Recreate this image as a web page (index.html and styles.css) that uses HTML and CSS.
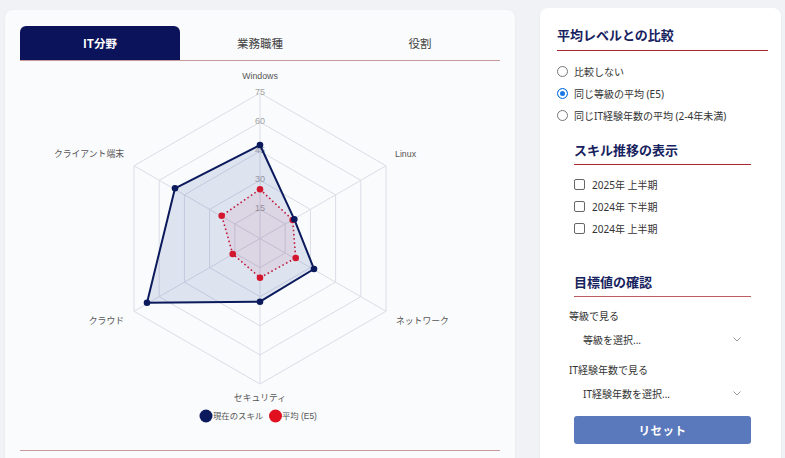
FILE: index.html
```html
<!DOCTYPE html>
<html lang="ja">
<head>
<meta charset="utf-8">
<title>スキル比較</title>
<link rel="stylesheet" href="styles.css">
</head>
<body>
<div class="page">
  <main class="chart-card">
    <nav class="tabs">
      <div class="tab active">IT分野</div>
      <div class="tab">業務職種</div>
      <div class="tab">役割</div>
    </nav>
    <svg class="radar" width="480" height="389" viewBox="0 0 480 389">
      <g transform="translate(-20,-61)">
        <g class="grid">
          <polygon points="260,93 386,165.75 386,311.25 260,384 134,311.25 134,165.75"/>
          <polygon points="260,122.1 360.8,180.3 360.8,296.7 260,354.9 159.2,296.7 159.2,180.3"/>
          <polygon points="260,151.2 335.6,194.85 335.6,282.15 260,325.8 184.4,282.15 184.4,194.85"/>
          <polygon points="260,180.3 310.4,209.4 310.4,267.6 260,296.7 209.6,267.6 209.6,209.4"/>
          <polygon points="260,209.4 285.2,223.95 285.2,253.05 260,267.6 234.8,253.05 234.8,223.95"/>
          <line x1="260" y1="238.5" x2="260" y2="93"/>
          <line x1="260" y1="238.5" x2="386" y2="165.75"/>
          <line x1="260" y1="238.5" x2="386" y2="311.25"/>
          <line x1="260" y1="238.5" x2="260" y2="384"/>
          <line x1="260" y1="238.5" x2="134" y2="311.25"/>
          <line x1="260" y1="238.5" x2="134" y2="165.75"/>
        </g>
        <g class="ticks">
          <text x="260" y="94.5">75</text>
          <text x="260" y="123.5">60</text>
          <text x="260" y="152.5">45</text>
          <text x="260" y="181.5">30</text>
          <text x="260" y="210.5">15</text>
        </g>
        <polygon class="area-avg" points="260,189.3 292.7,220 295.7,258 260,277.7 232.7,254 221.7,215.7"/>
        <polygon class="area-cur" points="260,145 294.3,219.3 314,269 260,301.7 147,302.7 175,188.3"/>
        <g class="pts-avg">
          <circle cx="260" cy="189.3" r="3.3"/>
          <circle cx="292.7" cy="220" r="3.3"/>
          <circle cx="295.7" cy="258" r="3.3"/>
          <circle cx="260" cy="277.7" r="3.3"/>
          <circle cx="232.7" cy="254" r="3.3"/>
          <circle cx="221.7" cy="215.7" r="3.3"/>
        </g>
        <g class="pts-cur">
          <circle cx="260" cy="145" r="3.3"/>
          <circle cx="294.3" cy="219.3" r="3.3"/>
          <circle cx="314" cy="269" r="3.3"/>
          <circle cx="260" cy="301.7" r="3.3"/>
          <circle cx="147" cy="302.7" r="3.3"/>
          <circle cx="175" cy="188.3" r="3.3"/>
        </g>
        <g class="axis-labels">
          <text x="260" y="79" text-anchor="middle">Windows</text>
          <text x="395" y="157">Linux</text>
          <text x="396" y="324">ネットワーク</text>
          <text x="260" y="401" text-anchor="middle">セキュリティ</text>
          <text x="124" y="324" text-anchor="end">クラウド</text>
          <text x="124" y="157" text-anchor="end">クライアント端末</text>
        </g>
        <g class="legend">
          <circle cx="206" cy="416" r="6.5" class="dot-cur"/>
          <text x="213" y="419">現在のスキル</text>
          <circle cx="275.5" cy="416" r="6.5" class="dot-avg"/>
          <text x="282" y="419">平均 (E5)</text>
        </g>
      </g>
    </svg>
    <div class="divider"></div>
  </main>

  <aside class="side-card">
    <section class="block">
      <h2 class="block-title">平均レベルとの比較</h2>
      <div class="opt-list">
        <label class="opt"><input type="radio" name="cmp" class="radio"><span>比較しない</span></label>
        <label class="opt"><input type="radio" name="cmp" class="radio" checked><span>同じ等級の平均 (E5)</span></label>
        <label class="opt"><input type="radio" name="cmp" class="radio"><span>同じIT経験年数の平均 (2-4年未満)</span></label>
      </div>
    </section>

    <section class="block inset trend">
      <h2 class="block-title">スキル推移の表示</h2>
      <div class="opt-list">
        <label class="opt check"><input type="checkbox" class="checkbox"><span>2025年 上半期</span></label>
        <label class="opt check"><input type="checkbox" class="checkbox"><span>2024年 下半期</span></label>
        <label class="opt check"><input type="checkbox" class="checkbox"><span>2024年 上半期</span></label>
      </div>
    </section>

    <section class="block inset target">
      <h2 class="block-title">目標値の確認</h2>
      <div class="field">
        <div class="field-label">等級で見る</div>
        <div class="select"><span>等級を選択...</span>
          <svg class="chev" width="8" height="5" viewBox="0 0 8 5"><polyline points="0.5,0.5 4,4 7.5,0.5"/></svg>
        </div>
      </div>
      <div class="field">
        <div class="field-label">IT経験年数で見る</div>
        <div class="select"><span>IT経験年数を選択...</span>
          <svg class="chev" width="8" height="5" viewBox="0 0 8 5"><polyline points="0.5,0.5 4,4 7.5,0.5"/></svg>
        </div>
      </div>
      <button class="reset" type="button">リセット</button>
    </section>
  </aside>
</div>
</body>
</html>
```

FILE: styles.css
```css
* { box-sizing: border-box; }

html, body {
  margin: 0;
  padding: 0;
  background: #f0f2f5;
  font-family: "Noto Sans", "Noto Sans CJK JP", sans-serif;
  color: #333;
  overflow: hidden;
}

.page {
  display: flex;
  align-items: flex-start;
  gap: 25px;
  padding: 0 4px 0 5px;
  height: 458px;
}

/* left card */
.chart-card {
  width: 510px;
  margin-top: 10px;
  height: 470px;
  background: #fafbfc;
  border-radius: 8px;
  box-shadow: 0 1px 3px rgba(0, 0, 0, 0.05);
  padding: 16px 15px 0 15px;
}

.tabs {
  display: flex;
  width: 480px;
  border-bottom: 1px solid #c99a9c;
}

.tab {
  width: 160px;
  height: 34px;
  display: flex;
  align-items: center;
  justify-content: center;
  font-family: "Noto Sans CJK JP", sans-serif;
  font-size: 11.5px;
  color: #444;
}

.tab.active {
  background: #0b145b;
  color: #fff;
  font-weight: 700;
  border-radius: 6px 6px 0 0;
}

.radar {
  display: block;
}

.grid polygon,
.grid line {
  fill: none;
  stroke: #d9dde6;
  stroke-width: 1;
}

.ticks text {
  font-family: "Liberation Sans", sans-serif;
  font-size: 9px;
  fill: #a3a3a3;
  text-anchor: middle;
}

.area-avg {
  fill: rgba(215, 30, 60, 0.07);
  stroke: #d3152e;
  stroke-width: 1.6;
  stroke-dasharray: 1.6 2.6;
}

.area-cur {
  fill: rgba(40, 70, 160, 0.13);
  stroke: #0b1a5c;
  stroke-width: 2;
  stroke-linejoin: round;
}

.pts-avg circle { fill: #d3152e; }
.pts-cur circle { fill: #0b1a5c; }

.axis-labels text {
  font-family: "Liberation Sans", "Noto Sans CJK JP", sans-serif;
  font-size: 8.8px;
  fill: #555;
}

.legend text {
  font-family: "Liberation Sans", "Noto Sans CJK JP", sans-serif;
  font-size: 8.4px;
  fill: #555;
}

.dot-cur { fill: #0b1a5c; }
.dot-avg { fill: #e0101e; }

.divider {
  width: 480px;
  border-top: 1px solid #c99a9c;
}

/* right card */
.side-card {
  width: 241px;
  margin-top: 8px;
  height: 470px;
  background: #fff;
  border-radius: 8px;
  box-shadow: 0 1px 3px rgba(0, 0, 0, 0.05);
  padding: 18px 13px 0 17px;
}

.block-title {
  margin: 0;
  font-family: "Noto Sans CJK JP", sans-serif;
  font-size: 13px;
  line-height: 18px;
  font-weight: 700;
  color: #16225e;
  padding-bottom: 6px;
  border-bottom: 1px solid #a8262f;
}

.opt-list {
  display: flex;
  flex-direction: column;
  margin-top: 9px;
}

.opt {
  height: 22px;
  display: flex;
  align-items: center;
  gap: 6px;
  font-family: "Noto Sans", "Noto Sans CJK JP", sans-serif;
  font-size: 10px;
  color: #333;
}

.radio {
  appearance: none;
  margin: 0;
  width: 11px;
  height: 11px;
  border-radius: 50%;
  border: 1px solid #777;
  background: #fff;
}

.radio:checked {
  border-color: #1677e5;
  background: #1677e5;
  box-shadow: inset 0 0 0 2px #fff;
}

.checkbox {
  appearance: none;
  margin: 0;
  width: 11px;
  height: 11px;
  border-radius: 2px;
  border: 1px solid #666;
  background: #fff;
}

.check { gap: 7px; }

.inset {
  margin-left: 17px;
  margin-right: 17px;
}

.trend { margin-top: 15px; }
.trend .block-title { padding-bottom: 5px; }
.trend .opt-list { margin-top: 8px; }

.target { margin-top: 34px; }
.target .block-title {
  padding-bottom: 5px;
  border-bottom-color: #c05b64;
}

.field { margin-top: 12px; }
.field + .field { margin-top: 11px; }

.field-label {
  margin-left: -5px;
  font-family: "Noto Sans", "Noto Sans CJK JP", sans-serif;
  font-size: 10px;
  line-height: 14px;
  color: #333;
}

.select {
  margin-top: 3px;
  height: 26px;
  display: flex;
  align-items: center;
  justify-content: space-between;
  padding: 0 10px 0 9px;
  font-family: "Noto Sans", "Noto Sans CJK JP", sans-serif;
  font-size: 10px;
  color: #333;
  background: #fff;
}

.chev polyline {
  fill: none;
  stroke: #999;
  stroke-width: 1;
}

.reset {
  display: block;
  width: 100%;
  height: 28px;
  margin-top: 10px;
  border: none;
  border-radius: 3px;
  background: #5a78bc;
  color: #fff;
  font-family: "Noto Sans CJK JP", sans-serif;
  font-size: 11.5px;
  font-weight: 700;
  letter-spacing: 0.5px;
}
```
